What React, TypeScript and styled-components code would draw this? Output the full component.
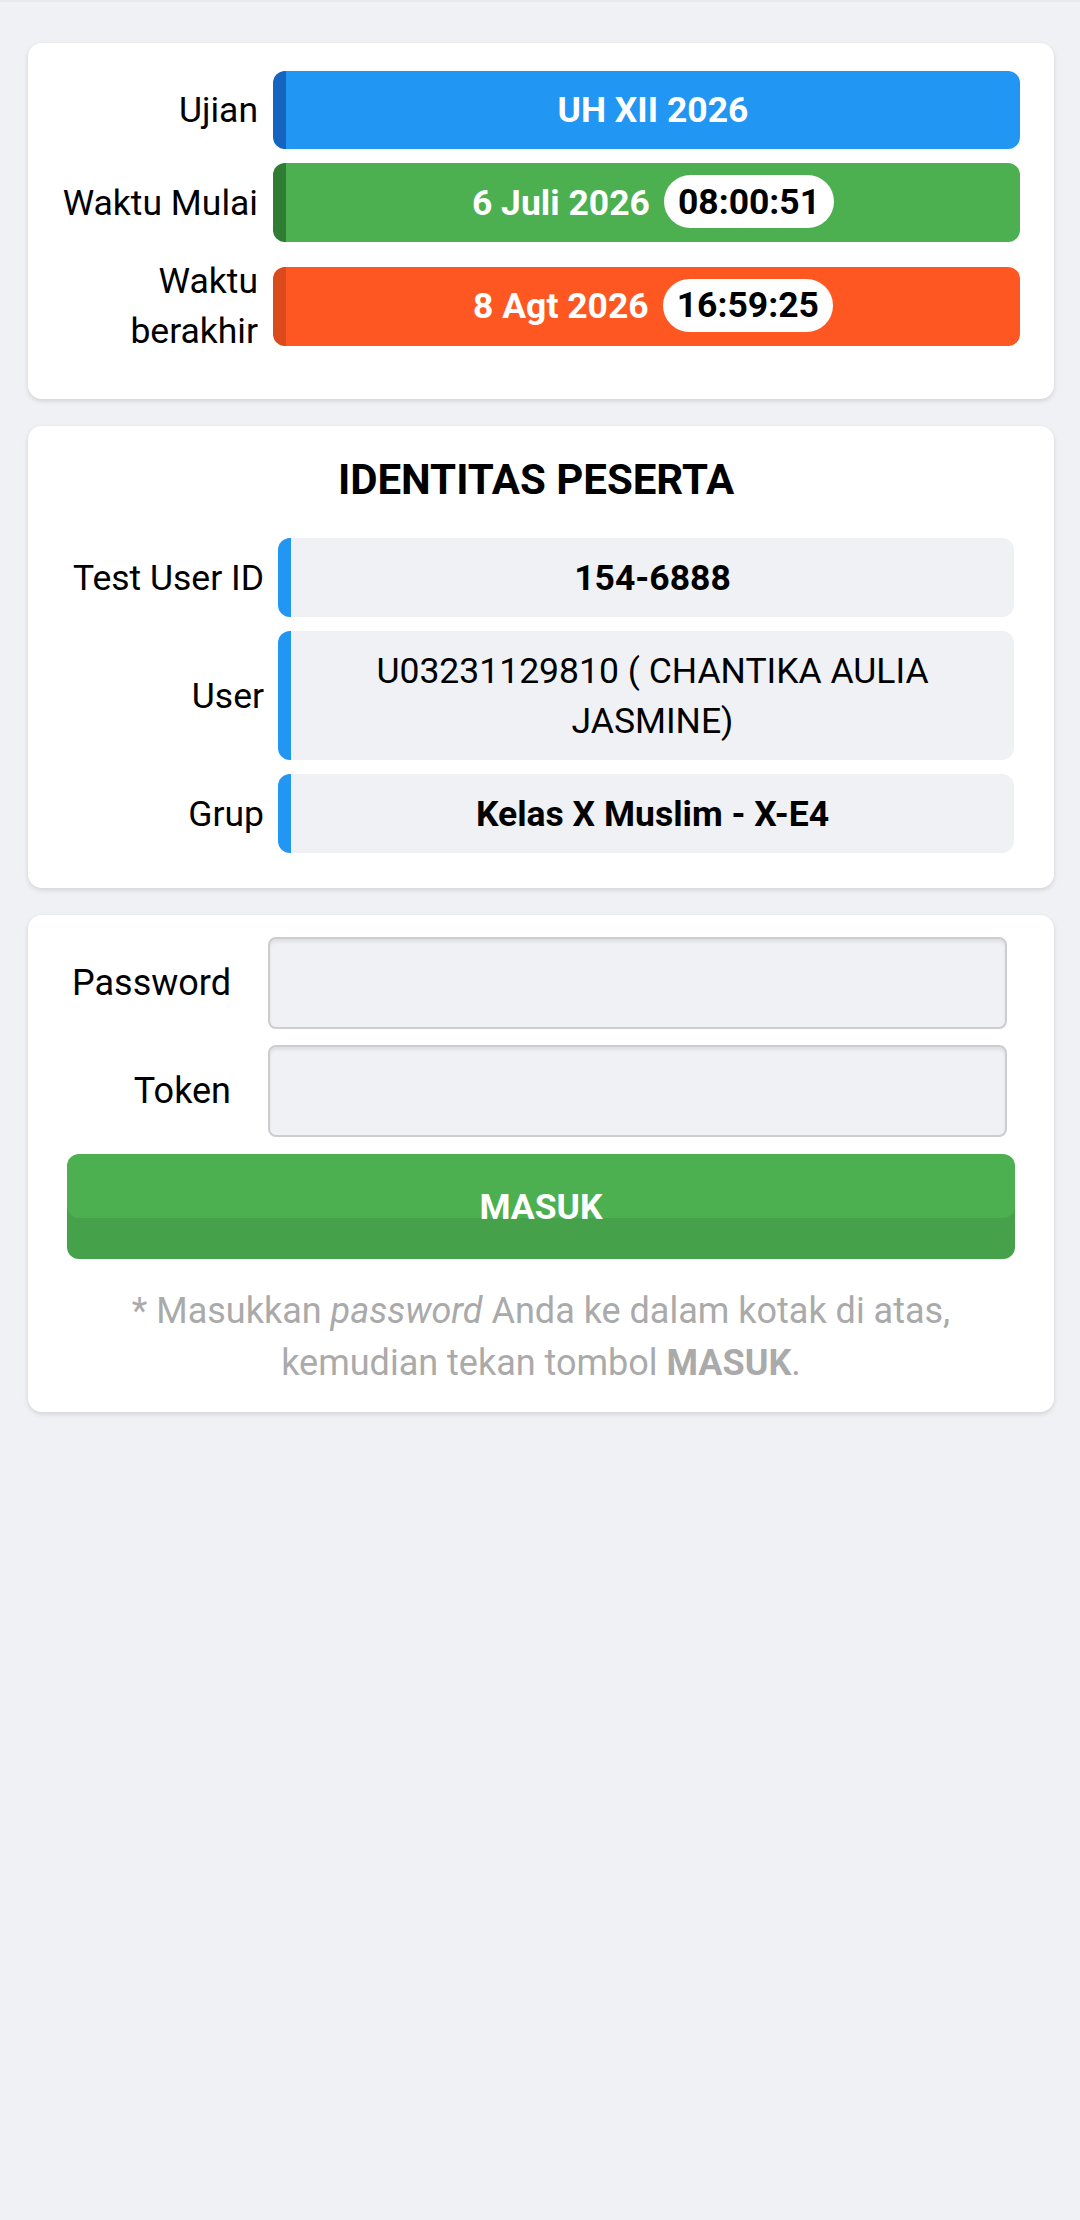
import React from 'react';
import styled, { createGlobalStyle } from 'styled-components';

const GlobalStyle = createGlobalStyle`
  html, body {
    margin: 0;
    padding: 0;
    background: #f0f1f5;
  }
  body {
    font-family: Roboto, "Noto Sans", "Liberation Sans", sans-serif;
    color: #000;
    -webkit-font-smoothing: antialiased;
  }
  * { box-sizing: border-box; }
`;

const Page = styled.div`
  min-height: 2220px;
  background: #f0f1f5;
  border-top: 2px solid #e8e9ec;
  padding: 41px 26px 40px 28px;
  display: flex;
  flex-direction: column;
  gap: 27px;
`;

const Card = styled.div<{ $pad: string }>`
  background: #fff;
  border-radius: 14px;
  box-shadow: 0 2px 5px rgba(0, 0, 0, 0.13);
  padding: ${({ $pad }) => $pad};
  display: flex;
  flex-direction: column;
`;

const Rows = styled.div`
  display: flex;
  flex-direction: column;
  gap: 14px;
`;

const Row = styled.div`
  display: flex;
  align-items: center;
`;

const Label = styled.div<{ $w: number; $gap: number; $size?: number }>`
  flex: 0 0 ${({ $w }) => $w}px;
  margin-right: ${({ $gap }) => $gap}px;
  text-align: right;
  font-size: ${({ $size }) => $size ?? 35.5}px;
  line-height: 50px;
`;

const ColorBar = styled.div<{ $bg: string; $edge: string; $h: number }>`
  flex: 1;
  height: ${({ $h }) => $h}px;
  background: ${({ $bg }) => $bg};
  border-left: 13px solid ${({ $edge }) => $edge};
  border-radius: 12px;
  display: flex;
  align-items: center;
  justify-content: center;
  gap: 14px;
  color: #fff;
  font-size: 35.5px;
  font-weight: 700;
`;

const TimePill = styled.span`
  display: inline-flex;
  align-items: center;
  height: 53px;
  padding: 0 14px;
  margin-top: -2px;
  border-radius: 27px;
  background: #fff;
  color: #000;
  font-size: 35.5px;
  font-weight: 700;
`;

const Title = styled.h2`
  margin: 0 0 34px;
  text-align: center;
  font-size: 42px;
  line-height: 48px;
  font-weight: 700;
`;

const ValueBox = styled.div<{ $bold?: boolean }>`
  flex: 1;
  background: #f0f1f5;
  border-left: 13px solid #2196f3;
  border-radius: 12px;
  padding: 14.5px 20px;
  text-align: center;
  font-size: 35.5px;
  line-height: 50px;
  font-weight: ${({ $bold }) => ($bold ? 700 : 400)};
`;

const FormRow = styled.div`
  display: flex;
  align-items: center;
  margin-right: 8px;
`;

const Input = styled.input`
  flex: 1;
  min-width: 0;
  height: 92px;
  background: #f0f1f5;
  border: 2px solid #cdcdcf;
  border-radius: 8px;
  box-shadow: inset 0 3px 3px rgba(0, 0, 0, 0.07);
  font-size: 36px;
  padding: 0 16px;
  outline: none;
`;

const Form = styled.div`
  display: flex;
  flex-direction: column;
  gap: 16px;
`;

const SubmitButton = styled.button`
  margin-top: 17px;
  height: 105px;
  border: none;
  border-radius: 12px;
  background: #4caf50;
  box-shadow: inset 0 -41px 0 rgba(0, 0, 0, 0.07);
  color: #fff;
  font-family: inherit;
  font-size: 35.5px;
  font-weight: 700;
  cursor: pointer;
`;

const Hint = styled.p`
  margin: 27px 0 0;
  text-align: center;
  color: #aaaaaa;
  font-size: 36px;
  line-height: 51.5px;
  padding: 0 10px;
`;

const exam = [
  { label: 'Ujian', bg: '#2196f3', edge: '#1565c0', h: 78, date: 'UH XII 2026' },
  { label: 'Waktu Mulai', bg: '#4caf50', edge: '#2e7d32', h: 79, date: '6 Juli 2026', time: '08:00:51' },
  { label: 'Waktu berakhir', bg: '#ff5722', edge: '#db4a1b', h: 79, date: '8 Agt 2026', time: '16:59:25' },
];

const identity = [
  { label: 'Test User ID', value: '154-6888', bold: true },
  { label: 'User', value: 'U03231129810 ( CHANTIKA AULIA JASMINE)', bold: false },
  { label: 'Grup', value: 'Kelas X Muslim - X-E4', bold: true },
];

export default function App() {
  return (
    <>
      <GlobalStyle />
      <Page>
        <Card $pad="28px 34px 43px 30px">
          <Rows>
            {exam.map((e) => (
              <Row key={e.label}>
                <Label $w={200} $gap={15}>{e.label}</Label>
                <ColorBar $bg={e.bg} $edge={e.edge} $h={e.h}>
                  <span>{e.date}</span>
                  {e.time && <TimePill>{e.time}</TimePill>}
                </ColorBar>
              </Row>
            ))}
          </Rows>
        </Card>

        <Card $pad="30px 40px 35px 30px">
          <Title>IDENTITAS PESERTA</Title>
          <Rows>
            {identity.map((r) => (
              <Row key={r.label}>
                <Label $w={206} $gap={14}>{r.label}</Label>
                <ValueBox $bold={r.bold}>{r.value}</ValueBox>
              </Row>
            ))}
          </Rows>
        </Card>

        <Card $pad="22px 39px 23px 39px">
          <Form>
            <FormRow>
              <Label $w={164} $gap={37} $size={36}>Password</Label>
              <Input type="password" />
            </FormRow>
            <FormRow>
              <Label $w={164} $gap={37} $size={36}>Token</Label>
              <Input type="text" />
            </FormRow>
          </Form>
          <SubmitButton>MASUK</SubmitButton>
          <Hint>
            * Masukkan <em>password</em> Anda ke dalam kotak di atas, kemudian tekan tombol <b>MASUK</b>.
          </Hint>
        </Card>
      </Page>
    </>
  );
}
